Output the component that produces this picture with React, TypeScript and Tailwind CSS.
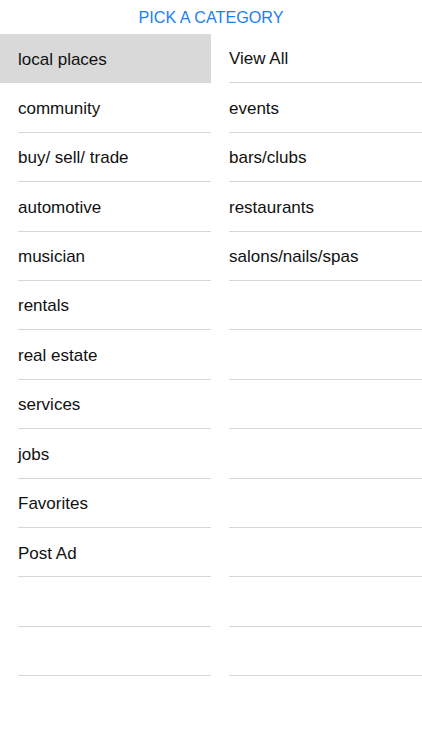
const leftItems = [
  "local places",
  "community",
  "buy/ sell/ trade",
  "automotive",
  "musician",
  "rentals",
  "real estate",
  "services",
  "jobs",
  "Favorites",
  "Post Ad",
  "",
  "",
];

const rightItems = [
  "View All",
  "events",
  "bars/clubs",
  "restaurants",
  "salons/nails/spas",
  "",
  "",
  "",
  "",
  "",
  "",
  "",
  "",
];

export default function App() {
  return (
    <div className="w-[422px] h-[750px] bg-white font-['Liberation_Sans',Arial,sans-serif] text-[#111]">
      {/* Header */}
      <div className="h-[34px] pt-[1px] flex items-center justify-center text-[16.2px] text-[#1a7ff5]">
        PICK A CATEGORY
      </div>

      <div className="flex">
        {/* Left column: main categories */}
        <div className="w-[211px]">
          {leftItems.map((item, i) => (
            <div
              key={i}
              className={`h-[49.42px] pl-[18px] ${i === 0 ? "bg-[#d9d9d9]" : ""}`}
            >
              <div
                className={`h-full pt-[2px] flex items-center text-[17px] ${
                  i === 0 ? "" : "border-b border-[#d6d6d8]"
                }`}
              >
                {item}
              </div>
            </div>
          ))}
        </div>

        {/* Right column: subcategories */}
        <div className="flex-1 pl-[18px]">
          {rightItems.map((item, i) => (
            <div
              key={i}
              className="h-[49.42px] pt-[2px] flex items-center border-b border-[#d6d6d8] text-[17px]"
            >
              {item}
            </div>
          ))}
        </div>
      </div>
    </div>
  );
}
